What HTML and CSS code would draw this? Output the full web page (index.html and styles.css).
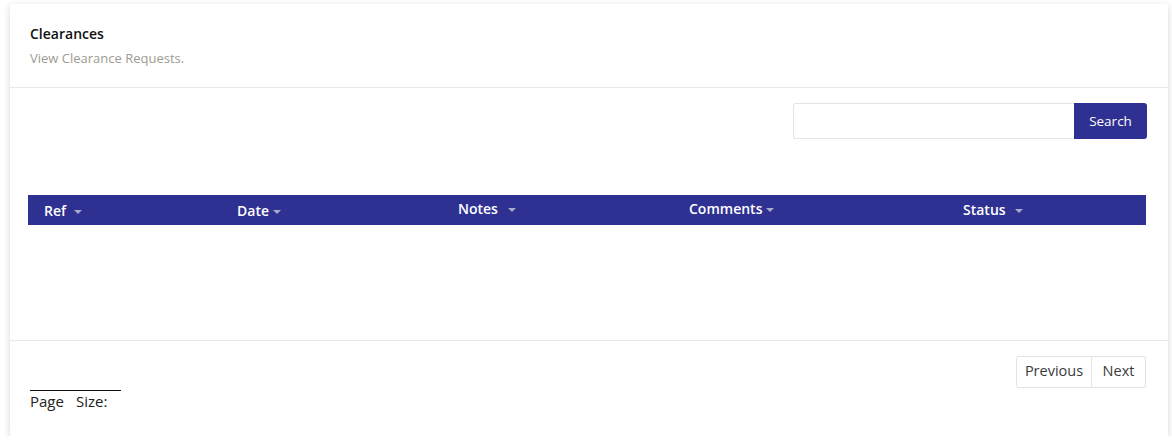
FILE: index.html
```html
<!DOCTYPE html>
<html>
<head>
<meta charset="utf-8">
<link rel="stylesheet" href="styles.css">
</head>
<body>
<div class="card">
  <div class="card-header">
    <div class="title">Clearances</div>
    <div class="subtitle">View Clearance Requests.</div>
  </div>
  <div class="card-body">
    <div class="search-row">
      <input class="search-input" type="text">
      <button class="search-btn">Search</button>
    </div>
    <div class="table-head">
      <div class="th th-ref">Ref <span class="caret"></span></div>
      <div class="th th-date">Date<span class="caret"></span></div>
      <div class="th th-notes">Notes <span class="caret"></span></div>
      <div class="th th-comments">Comments<span class="caret"></span></div>
      <div class="th th-status">Status <span class="caret"></span></div>
    </div>
  </div>
  <div class="card-footer">
    <div class="pager">
      <button class="page-btn">Previous</button>
      <button class="page-btn">Next</button>
    </div>
    <div class="page-size">
      <div class="page-line"></div>
      <div class="page-label"><span>Page</span><span>Size:</span></div>
    </div>
  </div>
</div>
</body>
</html>
```
FILE: styles.css
```css
* { box-sizing: border-box; }
html, body { background: #ffffff; }
body {
  margin: 0;
  padding: 4px 4px 0 10px;
  font-family: "Open Sans", "Noto Sans", sans-serif;
}
.card {
  background: #fff;
  height: 432px;
  box-shadow: 0 2px 7px rgba(0,0,0,0.17);
  border-radius: 2px;
  display: flex;
  flex-direction: column;
}
.card-header {
  padding: 20px 20px 20px 20px;
  border-bottom: 1px solid #e8e8e8;
}
.title {
  font-size: 14px;
  font-weight: 600;
  line-height: 19px;
  color: #111;
}
.subtitle {
  margin-top: 6px;
  font-size: 13px;
  line-height: 18px;
  color: #9d9b8f;
}
.card-body {
  padding: 15px 21px 0 18px;
  height: 253px;
  border-bottom: 1px solid #e8e8e8;
}
.search-row {
  display: flex;
  justify-content: flex-end;
}
.search-input {
  width: 281px;
  height: 36px;
  border: 1px solid #e4e4e4;
  border-right: none;
  border-radius: 3px 0 0 3px;
  margin: 0;
  padding: 0 8px;
  outline: none;
}
.search-btn {
  width: 73px;
  height: 36px;
  margin: 0;
  border: none;
  border-radius: 0 3px 3px 0;
  background: #2e3092;
  color: #fff;
  font-family: inherit;
  font-size: 13.5px;
  padding: 0;
}
.table-head {
  margin-top: 56px;
  margin-right: 1px;
  height: 30px;
  background: #2e3092;
  display: grid;
  grid-template-columns: 193px 221px 231px 274px 1fr;
  align-items: center;
}
.th {
  color: #fff;
  font-size: 14px;
  font-weight: 600;
  padding-left: 16px;
  line-height: 19px;
  position: relative;
  top: -1px;
}
.th-ref, .th-date { top: 0; }
.th-notes, .th-comments { top: -2px; }
.caret {
  display: inline-block;
  width: 0;
  height: 0;
  margin-left: 4px;
  vertical-align: middle;
  border-left: 4px solid transparent;
  border-right: 4px solid transparent;
  border-top: 4px solid #a9aacb;
}
.th-notes .caret, .th-status .caret { margin-left: 6px; }
.card-footer {
  flex: 1;
  padding: 15px 22px 0 20px;
}
.pager {
  display: flex;
  justify-content: flex-end;
}
.page-btn {
  height: 32px;
  margin: 0;
  background: #fff;
  border: 1px solid #e2e2e2;
  color: #3a3a3a;
  font-family: inherit;
  font-size: 14.5px;
  line-height: 28px;
  padding: 0 0 2px 0;
}
.page-btn:first-child { border-radius: 3px 0 0 3px; width: 76px; }
.page-btn + .page-btn { border-left: none; border-radius: 0 3px 3px 0; width: 54px; }
.page-size {
  margin-top: 2px;
}
.page-line {
  width: 91px;
  border-top: 1px solid #111;
}
.page-label {
  display: flex;
  gap: 12px;
  font-size: 15px;
  line-height: 20px;
  color: #222;
  margin-top: 0;
}
```
